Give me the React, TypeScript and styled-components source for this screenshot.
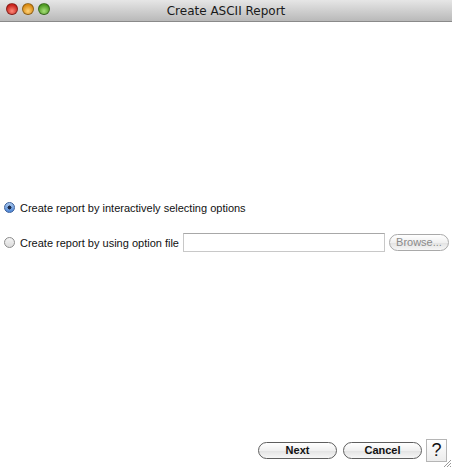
import React from "react";
import styled, { createGlobalStyle } from "styled-components";

const Global = createGlobalStyle`
  html, body { margin: 0; padding: 0; background: #ffffff; }
  body { font-family: "Liberation Sans", "DejaVu Sans", sans-serif; }
`;

const Window = styled.div`
  width: 452px;
  height: 468px;
  display: flex;
  flex-direction: column;
  background: #ffffff;
  position: relative;
  overflow: hidden;
`;

const TitleBar = styled.div`
  height: 22px;
  flex: none;
  display: flex;
  align-items: center;
  position: relative;
  background: linear-gradient(#e6e6e6, #b9b9b9);
  border-bottom: 1px solid #8a8a8a;
  box-sizing: border-box;
`;

const Lights = styled.div`
  display: flex;
  gap: 4px;
  padding-left: 6px;
  position: absolute;
  left: 0;
  top: 3px;
`;

const Light = styled.div<{ $c1: string; $c2: string }>`
  width: 12px;
  height: 12px;
  border-radius: 50%;
  box-sizing: border-box;
  border: 1px solid rgba(0, 0, 0, 0.35);
  background: radial-gradient(circle at 50% 70%, ${(p) => p.$c2} 0%, ${(p) => p.$c1} 70%);
`;

const Title = styled.div`
  flex: 1;
  text-align: center;
  font-family: "DejaVu Sans", sans-serif;
  font-size: 12px;
  color: #1a1a1a;
  padding-top: 1px;
`;

const Body = styled.div`
  flex: 1;
  display: flex;
  flex-direction: column;
  padding: 175px 3px 0 4px;
  gap: 14px;
`;

const Row = styled.label`
  display: flex;
  align-items: center;
  height: 21px;
  font-size: 11px;
  color: #111;
  white-space: nowrap;
`;

const Radio = styled.span<{ $on?: boolean }>`
  width: 11px;
  height: 11px;
  border-radius: 50%;
  box-sizing: border-box;
  border: 1px solid ${(p) => (p.$on ? "#3b5f9a" : "#8c8c8c")};
  background: ${(p) =>
    p.$on
      ? "radial-gradient(circle, #1b2a48 0 1.8px, transparent 2.2px), linear-gradient(#a9c8ef, #4d86d6)"
      : "linear-gradient(#f4f4f4, #dcdcdc)"};
  margin-right: 5px;
  flex: none;
`;

const TextField = styled.div`
  width: 202px;
  height: 19px;
  flex: none;
  box-sizing: border-box;
  border: 1px solid #c8c8c8;
  border-top-color: #a8a8a8;
  margin-left: 4px;
  background: #fff;
`;

const PillButton = styled.button<{ $w: number; $disabled?: boolean }>`
  width: ${(p) => p.$w}px;
  height: 17px;
  flex: none;
  border-radius: 9px;
  border: 1px solid ${(p) => (p.$disabled ? "#a9a9a9" : "#5e5e5e")};
  background: linear-gradient(#ffffff, #f0f0f0 50%, #e2e2e2 51%, #f6f6f6);
  font-family: inherit;
  font-size: 11px;
  font-weight: ${(p) => (p.$disabled ? "normal" : "bold")};
  color: ${(p) => (p.$disabled ? "#8a8a8a" : "#111")};
  padding: 0;
  line-height: 15px;
`;

const Spacer = styled.div`
  flex: 1;
`;

const Footer = styled.div`
  display: flex;
  align-items: center;
  justify-content: flex-end;
  padding: 0 2px 6px 0;
  gap: 6px;
`;

const HelpBox = styled.div`
  width: 21px;
  height: 23px;
  box-sizing: border-box;
  border: 1px solid #b5b5b5;
  background: linear-gradient(#ffffff, #ececec);
  display: flex;
  align-items: center;
  justify-content: center;
  font-family: "Liberation Sans", sans-serif;
  font-size: 18px;
  color: #111;
  margin-left: -2px;
`;

const Grip = styled.svg`
  position: absolute;
  right: 0;
  bottom: 0;
`;

export default function App() {
  return (
    <>
      <Global />
      <Window>
        <TitleBar>
          <Lights>
            <Light $c1="#c8231c" $c2="#ff8a7a" />
            <Light $c1="#d98a12" $c2="#ffd37a" />
            <Light $c1="#4e9a22" $c2="#a8e07a" />
          </Lights>
          <Title>Create ASCII Report</Title>
        </TitleBar>
        <Body>
          <Row>
            <Radio $on />
            Create report by interactively selecting options
          </Row>
          <Row>
            <Radio />
            Create report by using option file
            <TextField />
            <PillButton $w={60} $disabled style={{ marginLeft: 4 }}>
              Browse...
            </PillButton>
          </Row>
          <Spacer />
          <Footer>
            <PillButton $w={79}>Next</PillButton>
            <PillButton $w={79}>Cancel</PillButton>
            <HelpBox>?</HelpBox>
          </Footer>
        </Body>
        <Grip width="10" height="10" viewBox="0 0 10 10">
          <path d="M9 2 L2 9 M9 5 L5 9 M9 8 L8 9" stroke="#999" strokeWidth="1" />
        </Grip>
      </Window>
    </>
  );
}
